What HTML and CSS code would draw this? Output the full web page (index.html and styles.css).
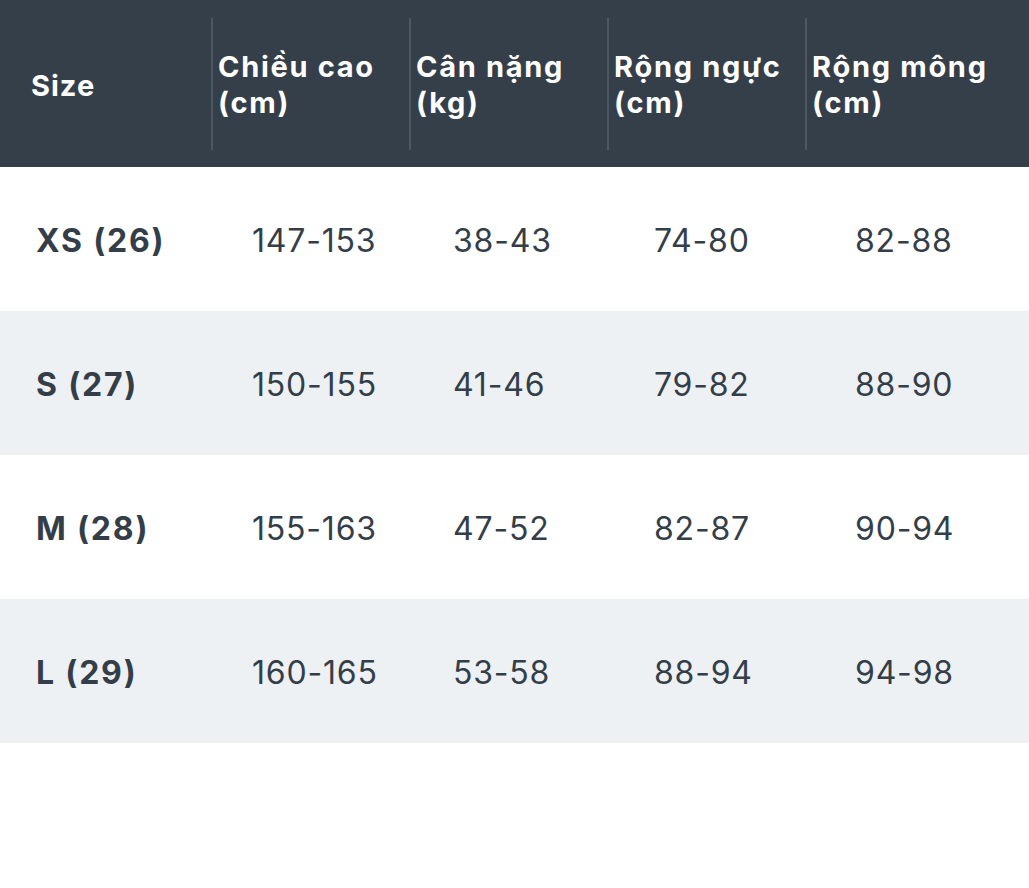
FILE: index.html
```html
<!DOCTYPE html>
<html lang="vi">
<head>
<meta charset="utf-8">
<title>Bảng size</title>
<link rel="stylesheet" href="styles.css">
</head>
<body>
<div class="size-table">
  <div class="head">
    <div class="hcell first">Size</div>
    <div class="hcell">Chiều cao<br>(cm)</div>
    <div class="hcell">Cân nặng<br>(kg)</div>
    <div class="hcell">Rộng ngực<br>(cm)</div>
    <div class="hcell">Rộng mông<br>(cm)</div>
  </div>
  <div class="row">
    <div class="cell label">XS (26)</div>
    <div class="cell">147-153</div>
    <div class="cell">38-43</div>
    <div class="cell">74-80</div>
    <div class="cell">82-88</div>
  </div>
  <div class="row alt">
    <div class="cell label">S (27)</div>
    <div class="cell">150-155</div>
    <div class="cell">41-46</div>
    <div class="cell">79-82</div>
    <div class="cell">88-90</div>
  </div>
  <div class="row">
    <div class="cell label">M (28)</div>
    <div class="cell">155-163</div>
    <div class="cell">47-52</div>
    <div class="cell">82-87</div>
    <div class="cell">90-94</div>
  </div>
  <div class="row alt">
    <div class="cell label">L (29)</div>
    <div class="cell">160-165</div>
    <div class="cell">53-58</div>
    <div class="cell">88-94</div>
    <div class="cell">94-98</div>
  </div>
</div>
</body>
</html>
```
FILE: styles.css
```css
html, body {
  margin: 0;
  padding: 0;
  background: #ffffff;
}
body {
  font-family: "Inter", "Open Sans", sans-serif;
  color: #343e48;
}
.size-table {
  width: 1029px;
}
.head {
  display: grid;
  grid-template-columns: 211px 198px 198px 198px 1fr;
  background: #353f4a;
  padding: 18px 0 17px;
  height: 132px;
}
.hcell {
  display: flex;
  align-items: center;
  color: #ffffff;
  font-size: 29px;
  font-weight: 700;
  line-height: 36px;
  letter-spacing: 1.7px;
  border-left: 2px solid #4d5761;
  padding-left: 5px;
  padding-top: 2px;
}
.hcell.first {
  border-left: none;
  padding-left: 31px;
  padding-top: 3px;
  letter-spacing: 1px;
}
.row {
  display: grid;
  grid-template-columns: 252px 201px 201px 201px 1fr;
  height: 144px;
  align-items: center;
  background: #ffffff;
}
.row.alt {
  background: #edf1f4;
}
.cell {
  font-size: 32px;
  font-weight: 400;
  letter-spacing: 0.8px;
  padding-top: 2px;
}
.cell.label {
  font-weight: 700;
  letter-spacing: 1.8px;
  padding-left: 36px;
}
```
